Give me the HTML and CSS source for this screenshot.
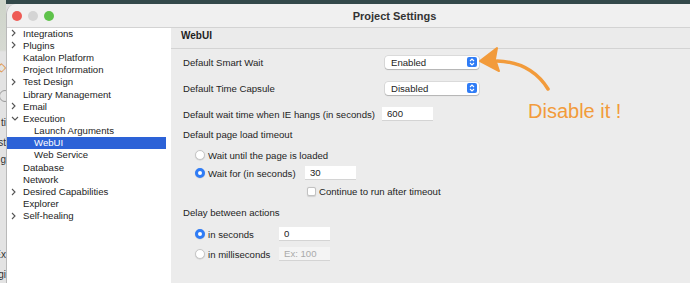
FILE: index.html
```html
<!DOCTYPE html>
<html>
<head>
    <title>Project Settings</title>
    <link rel="stylesheet" href="styles.css">
</head>
<body>
    <div class="desk">
        <div class="backdrop">
            <span class="frag frag-diamond">&#9671;</span>
            <span class="frag frag-ring"></span>
            <span class="frag frag-ti">ti</span>
            <span class="frag">st</span>
            <span class="frag">g</span>
            <span class="frag frag-ex">Ex</span>
            <span class="frag">gi</span>
        </div>
        <div class="window">
            <div class="titlebar">
                <div class="lights">
                    <span class="light red"></span>
                    <span class="light gray"></span>
                    <span class="light green"></span>
                </div>
                <div class="title">Project Settings</div>
                <div></div>
            </div>
            <div class="content">
                <div class="sidebar">
                    <ul class="tree">
                        <li><span class="twisty"><svg width="5" height="8" viewBox="0 0 5 8"><polyline points="1,1 4,4 1,7"/></svg></span>Integrations</li>
                        <li><span class="twisty"><svg width="5" height="8" viewBox="0 0 5 8"><polyline points="1,1 4,4 1,7"/></svg></span>Plugins</li>
                        <li><span class="twisty"></span>Katalon Platform</li>
                        <li><span class="twisty"></span>Project Information</li>
                        <li><span class="twisty"><svg width="5" height="8" viewBox="0 0 5 8"><polyline points="1,1 4,4 1,7"/></svg></span>Test Design</li>
                        <li><span class="twisty"></span>Library Management</li>
                        <li><span class="twisty"><svg width="5" height="8" viewBox="0 0 5 8"><polyline points="1,1 4,4 1,7"/></svg></span>Email</li>
                        <li><span class="twisty"><svg width="8" height="5" viewBox="0 0 8 5"><polyline points="1,1 4,4 7,1"/></svg></span>Execution</li>
                        <li class="child"><span class="twisty"></span>Launch Arguments</li>
                        <li class="child selected"><span class="twisty"></span>WebUI</li>
                        <li class="child"><span class="twisty"></span>Web Service</li>
                        <li><span class="twisty"></span>Database</li>
                        <li><span class="twisty"></span>Network</li>
                        <li><span class="twisty"><svg width="5" height="8" viewBox="0 0 5 8"><polyline points="1,1 4,4 1,7"/></svg></span>Desired Capabilities</li>
                        <li><span class="twisty"></span>Explorer</li>
                        <li><span class="twisty"><svg width="5" height="8" viewBox="0 0 5 8"><polyline points="1,1 4,4 1,7"/></svg></span>Self-healing</li>
                    </ul>
                </div>
                <div class="page">
                    <div class="page-head">WebUI</div>
                    <div class="form">
                        <div class="field">
                            <span class="field-label">Default Smart Wait</span>
                            <div class="select">
                                <span>Enabled</span>
                                <span class="stepper"><svg width="10" height="10" viewBox="0 0 10 10"><polyline points="3,4 5,2 7,4"/><polyline points="3,6 5,8 7,6"/></svg></span>
                            </div>
                        </div>
                        <div class="field">
                            <span class="field-label">Default Time Capsule</span>
                            <div class="select">
                                <span>Disabled</span>
                                <span class="stepper"><svg width="10" height="10" viewBox="0 0 10 10"><polyline points="3,4 5,2 7,4"/><polyline points="3,6 5,8 7,6"/></svg></span>
                            </div>
                        </div>
                        <div class="field">
                            <span class="field-label">Default wait time when IE hangs (in seconds)</span>
                            <input class="text-input ie-input" type="text" value="600" readonly>
                        </div>

                        <div class="group-label">Default page load timeout</div>
                        <div class="option">
                            <span class="radio"></span>
                            <span>Wait until the page is loaded</span>
                        </div>
                        <div class="option">
                            <span class="radio checked"></span>
                            <span class="option-label wait-label">Wait for (in seconds)</span>
                            <input class="text-input" type="text" value="30" readonly>
                        </div>
                        <div class="option check-row">
                            <span class="checkbox"></span>
                            <span>Continue to run after timeout</span>
                        </div>

                        <div class="group-label delay-label">Delay between actions</div>
                        <div class="option delay-row">
                            <span class="radio checked"></span>
                            <span class="option-label delay-text">in seconds</span>
                            <input class="text-input" type="text" value="0" readonly>
                        </div>
                        <div class="option delay-row">
                            <span class="radio"></span>
                            <span class="option-label delay-text">in milliseconds</span>
                            <input class="text-input disabled" type="text" placeholder="Ex: 100" readonly>
                        </div>
                    </div>
                </div>
            </div>
        </div>

        <svg class="annotation" width="690" height="283" viewBox="0 0 690 283">
            <path class="arrow-shaft" d="M497 61 Q531 62 548 89"/>
            <polygon class="arrow-head" points="480,61 497,48 495,59 499,71"/>
        </svg>
        <div class="note">Disable it !</div>
    </div>
</body>
</html>
```

FILE: styles.css
```css
body {
    margin: 0;
    width: 690px;
    height: 283px;
    overflow: hidden;
    font-family: "Liberation Sans", Arial, sans-serif;
    font-size: 9.6px;
    color: #242424;
    background: linear-gradient(#33494a 0, #33494a 4px, #dcdcdc 4px);
}
.desk {
    position: relative;
    display: flex;
    height: 283px;
}
.backdrop {
    width: 6px;
    flex-shrink: 0;
    display: flex;
    flex-direction: column;
    align-items: flex-end;
    padding-top: 59px;
    overflow: hidden;
    background: linear-gradient(#cfd5ca 4px, #d6d9d2 50px, #e3e3e3 52px);
}
.frag {
    display: block;
    height: 17px;
    line-height: 17px;
    font-size: 10px;
    color: #333;
    white-space: nowrap;
}
.frag-diamond {
    color: #e08a2c;
    font-size: 12px;
    height: 22px;
}
.frag-ring {
    width: 10px;
    height: 10px;
    margin: 9px -5px 10px 0;
    border: 1px solid #999;
    border-radius: 50%;
}
.frag-ti {
    margin-top: 2px;
    height: 20px;
}
.frag-ex {
    margin-top: 78px;
    height: 20px;
}

.window {
    width: 775px;
    height: 300px;
    flex-shrink: 0;
    margin-top: 4px;
    border-left: 1px solid #b9b9b9;
    border-top-left-radius: 10px;
    overflow: hidden;
    background: #ececec;
}
.titlebar {
    display: grid;
    grid-template-columns: 1fr auto 1fr;
    align-items: center;
    height: 23px;
    background: #f0f0f0;
    border-bottom: 1px solid #d3d3d3;
}
.lights {
    display: flex;
    gap: 6px;
    padding-left: 5px;
}
.light {
    width: 10px;
    height: 10px;
    border-radius: 50%;
}
.red { background: #ee5b55; }
.gray { background: #d4d4d4; }
.green { background: #5ec24a; }
.title {
    font-size: 11px;
    font-weight: bold;
    color: #333;
}

.content {
    display: flex;
    height: 276px;
}
.sidebar {
    width: 164px;
    background: #fff;
}
.tree {
    list-style: none;
    margin: -1px 0 0 0;
    padding: 0;
    width: 159px;
}
.tree li {
    display: flex;
    align-items: center;
    height: 12.2px;
    padding-left: 4px;
    white-space: nowrap;
}
.tree li.child {
    padding-left: 15px;
}
.tree li.selected {
    background: #2c62d7;
    color: #fff;
}
.twisty {
    display: flex;
    align-items: center;
    width: 12px;
}
.twisty svg {
    fill: none;
    stroke: #555;
    stroke-width: 1.1;
}

.page {
    flex: 1;
    background: #ececec;
}
.page-head {
    height: 18px;
    padding: 2px 0 0 10px;
    font-size: 10px;
    font-weight: bold;
    color: #1e1e1e;
    background: #ebebeb;
    border-bottom: 1px solid #d3d3d3;
}
.form {
    padding-left: 12px;
}
.field {
    display: flex;
    align-items: center;
    height: 26px;
}
.field-label {
    width: 199px;
}
.select {
    display: flex;
    align-items: center;
    justify-content: space-between;
    width: 86px;
    height: 13px;
    margin-left: 3px;
    padding: 0 2px 0 6px;
    background: #fff;
    border-radius: 3px;
    box-shadow: 0 0 0 0.5px rgba(0,0,0,0.15), 0 1px 1px rgba(0,0,0,0.18);
}
.stepper {
    display: flex;
    width: 10px;
    height: 10px;
    border-radius: 2px;
    background: #2f7cf6;
}
.stepper svg {
    fill: none;
    stroke: #fff;
    stroke-width: 1.1;
}
.text-input {
    box-sizing: border-box;
    width: 51px;
    height: 14px;
    margin: 0;
    padding: 0 5px;
    border: none;
    border-bottom: 1px solid #d4d4d4;
    background: #fff;
    font-family: inherit;
    font-size: 9.6px;
    color: #242424;
    outline: none;
}
.text-input.disabled {
    background: #f4f4f4;
}
.text-input::placeholder {
    color: #aaa;
}
.group-label {
    height: 16px;
    line-height: 16px;
}
.option {
    display: flex;
    align-items: center;
    height: 18px;
    padding-left: 12px;
}
.group-label + .option {
    margin-top: 3px;
}
.radio {
    box-sizing: border-box;
    width: 10px;
    height: 10px;
    margin-right: 3px;
    border-radius: 50%;
    background: #fff;
    border: 0.5px solid #c6c6c6;
    box-shadow: 0 0.5px 1px rgba(0,0,0,0.15);
}
.radio.checked {
    border: 3.3px solid #2f7cf6;
    background: #fff;
}
.wait-label {
    width: 97px;
}
.check-row {
    height: 19px;
    padding-left: 124px;
}
.checkbox {
    box-sizing: border-box;
    width: 9px;
    height: 9px;
    margin-right: 3px;
    border-radius: 2px;
    background: #fff;
    border: 0.5px solid #c2c2c2;
    box-shadow: 0 0.5px 1px rgba(0,0,0,0.12);
}
.delay-label {
    margin-top: 4px;
}
.delay-row {
    height: 20px;
}
.delay-text {
    width: 71px;
}

.annotation {
    position: absolute;
    top: 0;
    left: 0;
    pointer-events: none;
}
.arrow-shaft {
    fill: none;
    stroke: #f29b3b;
    stroke-width: 3.5;
    stroke-linecap: round;
}
.arrow-head {
    fill: #f29b3b;
    stroke: #f29b3b;
    stroke-width: 2;
    stroke-linejoin: round;
}
.note {
    position: absolute;
    left: 528px;
    top: 101px;
    font-size: 20px;
    line-height: 20px;
    color: #f29b3b;
}
```
